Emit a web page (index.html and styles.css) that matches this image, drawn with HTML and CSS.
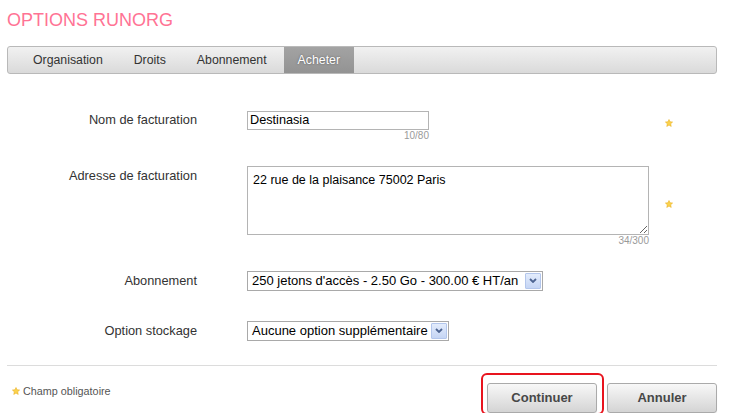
FILE: index.html
```html
<!DOCTYPE html>
<html lang="fr">
<head>
<meta charset="utf-8">
<title>Options RunOrg</title>
<link rel="stylesheet" href="styles.css">
</head>
<body>
<div class="page">
  <h1 class="title">OPTIONS RUNORG</h1>
  <nav class="tabs">
    <a class="tab">Organisation</a>
    <a class="tab">Droits</a>
    <a class="tab">Abonnement</a>
    <a class="tab tab-active">Acheter</a>
  </nav>

  <form class="form">
    <div class="row">
      <label class="label">Nom de facturation</label>
      <div class="field">
        <div class="fieldbox">
          <input class="input" type="text" value="Destinasia">
          <span class="counter">10/80</span>
        </div>
      </div>
      <svg class="star star-1" viewBox="0 0 10 10" width="8" height="8"><polygon points="5,0.6 6.3,3.5 9.5,3.8 7.1,6 7.8,9.3 5,7.6 2.2,9.3 2.9,6 0.5,3.8 3.7,3.5" /></svg>
    </div>

    <div class="row">
      <label class="label">Adresse de facturation</label>
      <div class="field">
        <div class="fieldbox fieldbox-full">
          <textarea class="textarea">22 rue de la plaisance 75002 Paris</textarea>
          <span class="counter">34/300</span>
        </div>
      </div>
      <svg class="star star-2" viewBox="0 0 10 10" width="8" height="8"><polygon points="5,0.6 6.3,3.5 9.5,3.8 7.1,6 7.8,9.3 5,7.6 2.2,9.3 2.9,6 0.5,3.8 3.7,3.5" /></svg>
    </div>

    <div class="row">
      <label class="label label-select">Abonnement</label>
      <div class="field">
        <div class="select select-wide">
          <span class="select-text">250 jetons d'accès - 2.50 Go - 300.00 € HT/an</span>
          <span class="select-arrow"><svg viewBox="0 0 8 5" width="8" height="5"><polyline points="1,1 4,4 7,1" /></svg></span>
        </div>
      </div>
    </div>

    <div class="row row-spaced">
      <label class="label label-select">Option stockage</label>
      <div class="field">
        <div class="select select-narrow">
          <span class="select-text">Aucune option supplémentaire</span>
          <span class="select-arrow"><svg viewBox="0 0 8 5" width="8" height="5"><polyline points="1,1 4,4 7,1" /></svg></span>
        </div>
      </div>
    </div>
  </form>

  <hr class="sep">

  <div class="footer">
    <div class="legend">
      <svg class="legend-star" viewBox="0 0 10 10" width="8" height="8"><polygon points="5,0.6 6.3,3.5 9.5,3.8 7.1,6 7.8,9.3 5,7.6 2.2,9.3 2.9,6 0.5,3.8 3.7,3.5" /></svg>
      <span>Champ obligatoire</span>
    </div>
    <div class="actions">
      <div class="btn-wrap">
        <button class="btn" type="button">Continuer</button>
        <span class="highlight"></span>
      </div>
      <button class="btn" type="button">Annuler</button>
    </div>
  </div>
</div>
</body>
</html>
```

FILE: styles.css
```css
html, body {
  margin: 0;
  padding: 0;
  background: #ffffff;
}

body {
  font-family: "Liberation Sans", Arial, sans-serif;
  color: #333333;
}

.page {
  width: 710px;
  padding-left: 7px;
}

.title {
  margin: 0;
  padding-top: 10px;
  font-size: 18px;
  line-height: 20px;
  font-weight: normal;
  color: #ff7394;
}

.tabs {
  margin-top: 16px;
  height: 26px;
  border: 1px solid #b9b9b9;
  border-radius: 3px;
  background: linear-gradient(#f1f1f1, #dadada);
  display: flex;
  gap: 3px;
  padding-left: 11px;
}

.tab {
  padding: 0 14px;
  font-size: 12.3px;
  line-height: 26px;
  color: #333333;
  cursor: pointer;
}

.tab-active {
  background: linear-gradient(#a3a3a3, #939393);
  color: #ffffff;
  text-shadow: 0 0 2px #555555;
}

.form {
  padding-top: 36px;
  display: flex;
  flex-direction: column;
  gap: 24px;
}

.row {
  display: flex;
  align-items: flex-start;
}

.row-spaced {
  margin-top: 6px;
}

.label {
  width: 190px;
  flex: none;
  text-align: right;
  font-size: 12.8px;
  line-height: 19px;
  color: #333333;
}

.label-select {
  line-height: 20px;
}

.field {
  width: 402px;
  margin-left: 50px;
  flex: none;
}

.fieldbox {
  display: inline-flex;
  flex-direction: column;
  align-items: flex-end;
}

.fieldbox-full {
  display: flex;
}

.input {
  box-sizing: border-box;
  width: 182px;
  height: 19px;
  margin: 0;
  padding: 0 2px;
  border: 1px solid #b4b4b4;
  font-family: "Liberation Sans", Arial, sans-serif;
  font-size: 12.7px;
  color: #000000;
  outline: none;
}

.textarea {
  display: block;
  box-sizing: border-box;
  width: 402px;
  height: 69px;
  margin: 0;
  padding: 6px 5px;
  border: 1px solid #b4b4b4;
  font-family: "Liberation Sans", Arial, sans-serif;
  font-size: 12.5px;
  line-height: 15px;
  color: #000000;
  outline: none;
}

.counter {
  font-size: 10px;
  line-height: 12px;
  color: #9a9a9a;
}

.star {
  flex: none;
  margin-left: 16px;
  align-self: center;
  fill: #fbd24c;
  stroke: #eaae1f;
  stroke-width: 0.7;
}

.star-1 {
  margin-bottom: 6px;
}

.star-2 {
  margin-bottom: 5px;
}

.select {
  box-sizing: border-box;
  height: 20px;
  border: 1px solid #a9a9a9;
  display: flex;
  align-items: center;
  justify-content: space-between;
  padding: 0 1px 0 4px;
  background: #ffffff;
}

.select-wide {
  width: 296px;
}

.select-narrow {
  width: 202px;
}

.select-text {
  font-size: 13px;
  color: #000000;
  white-space: nowrap;
}

.select-arrow {
  box-sizing: border-box;
  width: 16px;
  height: 16px;
  border: 1px solid #b3c6ec;
  border-radius: 1px;
  background: linear-gradient(#e3ecfc, #c5d5f4);
  display: flex;
  align-items: center;
  justify-content: center;
}

.select-arrow polyline {
  fill: none;
  stroke: #4d6491;
  stroke-width: 1.8;
}

.sep {
  margin: 24px 0 0 0;
  border: 0;
  border-top: 1px solid #dcdcdc;
  height: 0;
}

.footer {
  margin-top: 17px;
  display: flex;
  justify-content: space-between;
  align-items: flex-start;
}

.legend {
  margin-top: 2px;
  padding-left: 5px;
  display: flex;
  align-items: center;
  gap: 3px;
  font-size: 10.8px;
  line-height: 12px;
  color: #555555;
}

.legend-star {
  fill: #fbd24c;
  stroke: #eaae1f;
  stroke-width: 0.7;
}

.actions {
  display: flex;
  gap: 10px;
}

.btn-wrap {
  position: relative;
}

.btn {
  display: block;
  box-sizing: border-box;
  width: 110px;
  height: 30px;
  margin: 0;
  padding: 0;
  border: 1px solid #aaaaaa;
  border-radius: 3px;
  background: linear-gradient(#f8f8f8, #d4d4d4);
  box-shadow: 0 1px 1px rgba(0, 0, 0, 0.08);
  font-family: "Liberation Sans", Arial, sans-serif;
  font-size: 13px;
  font-weight: bold;
  color: #474747;
  cursor: pointer;
}

.highlight {
  position: absolute;
  top: -10px;
  left: -6px;
  right: -7px;
  bottom: -2px;
  border: 2px solid #e8141e;
  border-radius: 6px;
  pointer-events: none;
}
```
